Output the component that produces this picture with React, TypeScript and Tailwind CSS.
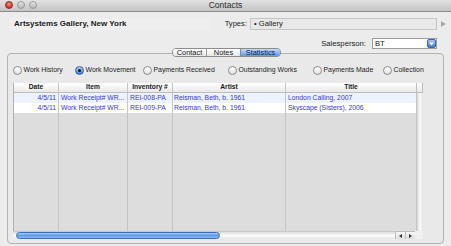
import React from 'react';

function Radio({ checked }: { checked?: boolean }) {
  return checked ? (
    <span className="w-[9px] h-[9px] rounded-full border border-[#2f5fa8] bg-gradient-to-b from-[#b4d3f8] to-[#3c7ddf] flex items-center justify-center shrink-0">
      <span className="w-[3px] h-[3px] rounded-full bg-[#111]" />
    </span>
  ) : (
    <span className="w-[9px] h-[9px] rounded-full border border-[#8a8a8a] bg-gradient-to-b from-white to-[#e2e2e2] shrink-0" />
  );
}

const radios = [
  { label: 'Work History', w: 'w-[62px]', checked: false },
  { label: 'Work Movement', w: 'w-[68px]', checked: true },
  { label: 'Payments Received', w: 'w-[85px]', checked: false },
  { label: 'Outstanding Works', w: 'w-[85px]', checked: false },
  { label: 'Payments Made', w: 'w-[70px]', checked: false },
  { label: 'Collection', w: 'w-[45px]', checked: false },
];

const rows = [
  {
    date: '4/5/11',
    item: 'Work Receipt# WR...',
    inv: 'REI-008-PA',
    artist: 'Reisman, Beth, b. 1961',
    title: 'London Calling, 2007',
    bg: 'bg-[#edf3fe]',
  },
  {
    date: '4/5/11',
    item: 'Work Receipt# WR...',
    inv: 'REI-009-PA',
    artist: 'Reisman, Beth, b. 1961',
    title: 'Skyscape (Sisters), 2006',
    bg: 'bg-white',
  },
];

export default function App() {
  return (
    <div className="w-[451px] h-[246px] overflow-hidden bg-[#ececec] font-['Liberation_Sans',Arial,sans-serif] text-[#1a1a1a] flex flex-col">
      {/* Title bar */}
      <div className="h-[12px] shrink-0 relative flex items-center justify-center bg-gradient-to-b from-[#e2e2e2] to-[#c4c4c4] border-b border-[#8c8c8c]">
        <div className="absolute left-[5px] top-[1px] flex gap-[4px]">
          <span className="w-[8px] h-[8px] rounded-full bg-[radial-gradient(circle_at_50%_35%,#ff9a8c,#d9362b_60%,#a8201a)] border border-[#9c2a22]" />
          <span className="w-[8px] h-[8px] rounded-full bg-gradient-to-b from-[#e6e6e6] to-[#b5b5b5] border border-[#9a9a9a]" />
          <span className="w-[8px] h-[8px] rounded-full bg-gradient-to-b from-[#e6e6e6] to-[#b5b5b5] border border-[#9a9a9a]" />
        </div>
        <span className="text-[8.5px] leading-none text-[#2a2a2a]">Contacts</span>
      </div>

      {/* Row 1 */}
      <div className="mt-[6px] h-[12px] shrink-0 flex items-center">
        <div className="ml-[10px] w-[200px] h-[12px] bg-[#efefef] flex items-center pl-[4px] text-[8px] font-bold leading-none">
          Artsystems Gallery, New York
        </div>
        <div className="ml-auto flex items-center">
          <span className="text-[7.6px] leading-none">Types:</span>
          <div className="ml-[3px] w-[187px] h-[12px] border border-[#c4c4c4] bg-[#e8e8e8] text-[7.6px] leading-none pl-[3px] flex items-center">
            • Gallery
          </div>
          <svg width="5" height="6" viewBox="0 0 5 6" className="ml-[4px] mr-[5px]">
            <path d="M0 0 L5 3 L0 6 Z" fill="#a8a8a8" />
          </svg>
        </div>
      </div>

      {/* Row 2 */}
      <div className="mt-[8px] h-[11px] shrink-0 flex items-center justify-end pr-[14px]">
        <span className="text-[7.7px] leading-none mr-[6px]">Salesperson:</span>
        <div className="w-[65px] h-[11px] bg-white border border-[#9c9c9c] flex items-center">
          <span className="text-[7.6px] leading-none pl-[2px] flex-1">BT</span>
          <span className="w-[9px] h-[9px] mr-[0px] rounded-[2px] bg-gradient-to-b from-[#a6c9f6] to-[#3b78d8] border border-[#3a66a8] flex items-center justify-center">
            <svg width="5" height="4" viewBox="0 0 5 4">
              <path d="M0 0.5 L5 0.5 L2.5 3.5 Z" fill="#fff" />
            </svg>
          </span>
        </div>
      </div>

      {/* Group box */}
      <div className="mt-[4px] ml-[7px] w-[437px] flex-1 mb-[2px] relative border border-[#b3b3b3] rounded-[4px] bg-[#e9e9e9] flex flex-col pl-[5px]">
        {/* Tabs */}
        <div className="absolute left-[164px] top-[-6px] h-[9px] flex border border-[#8c8c8c] rounded-[4px] overflow-hidden text-[7.4px] leading-none">
          <div className="w-[34px] flex items-center justify-center bg-gradient-to-b from-white to-[#e6e6e6] border-r border-[#9c9c9c]">Contact</div>
          <div className="w-[34px] flex items-center justify-center bg-gradient-to-b from-white to-[#e6e6e6] border-r border-[#6f8fc2]">Notes</div>
          <div className="w-[39px] flex items-center justify-center bg-gradient-to-b from-[#c3dbfa] to-[#5f98ea] text-[#0d1f45]">Statistics</div>
        </div>

        {/* Radio row */}
        <div className="mt-[11px] h-[10px] flex items-center shrink-0">
          {radios.map((r) => (
            <div key={r.label} className={`${r.w} flex items-center shrink-0`}>
              <Radio checked={r.checked} />
              <span className="ml-[1.5px] text-[6.9px] leading-none text-[#222]">{r.label}</span>
            </div>
          ))}
        </div>

        {/* Table */}
        <div className="mt-[8px] w-[410px] h-[148px] flex border-l border-[#b0b0b0] shrink-0">
          <div className="w-[402px] flex flex-col">
            {/* header */}
            <div className="h-[10px] flex bg-gradient-to-b from-white to-[#e9e9e9] border-b border-[#bdbdbd] text-[6.7px] font-bold leading-none">
              <div className="w-[45px] border-r border-[#c6c6c6] flex items-center justify-center">Date</div>
              <div className="w-[69px] border-r border-[#c6c6c6] flex items-center justify-center">Item</div>
              <div className="w-[45px] border-r border-[#c6c6c6] flex items-center justify-center">Inventory #</div>
              <div className="w-[113px] border-r border-[#c6c6c6] flex items-center justify-center">Artist</div>
              <div className="w-[130px] flex items-center justify-center">Title</div>
            </div>
            {rows.map((r, i) => (
              <div key={i} className={`h-[10px] flex ${r.bg} text-[6.8px] leading-none text-[#3737e6]`}>
                <div className="w-[45px] border-r border-[#c8c8c8] flex items-center justify-end pr-[2px]">{r.date}</div>
                <div className="w-[69px] border-r border-[#c8c8c8] flex items-center pl-[2px] whitespace-nowrap overflow-hidden">{r.item}</div>
                <div className="w-[45px] border-r border-[#c8c8c8] flex items-center pl-[2px] whitespace-nowrap overflow-hidden">{r.inv}</div>
                <div className="w-[113px] border-r border-[#c8c8c8] flex items-center pl-[1px] whitespace-nowrap overflow-hidden">{r.artist}</div>
                <div className="w-[130px] flex items-center pl-[2px] whitespace-nowrap overflow-hidden">{r.title}</div>
              </div>
            ))}
            <div className="flex-1 flex bg-[#dddddd]">
              <div className="w-[45px] border-r border-[#c4c4c4]" />
              <div className="w-[69px] border-r border-[#c4c4c4]" />
              <div className="w-[45px] border-r border-[#c4c4c4]" />
              <div className="w-[113px] border-r border-[#c4c4c4]" />
              <div className="w-[130px]" />
            </div>
          </div>
          {/* vertical scrollbar */}
          <div className="w-[8px] flex flex-col">
            <div className="h-[10px] bg-gradient-to-b from-white to-[#e9e9e9] border-b border-l border-r border-[#bdbdbd]" />
            <div className="flex-1 bg-gradient-to-r from-[#d8d8d8] via-[#fbfbfb] to-[#e4e4e4] border-l border-[#c4c4c4]" />
          </div>
        </div>

        {/* Horizontal scrollbar */}
        <div className="w-[410px] h-[9px] flex shrink-0">
          <div className="w-[382px] h-[8px] bg-gradient-to-b from-[#dcdcdc] via-[#fbfbfb] to-[#e8e8e8] border-t border-[#c8c8c8] flex items-center pl-[3px]">
            <div className="w-[204px] h-[7px] rounded-full border border-[#3d6fb8] bg-gradient-to-b from-[#a9cdf7] via-[#5d9bec] to-[#8dbcf4]" />
          </div>
          <div className="w-[10px] h-[8px] bg-gradient-to-b from-[#f6f6f6] to-[#dedede] border-t border-l border-[#bdbdbd] flex items-center justify-center">
            <svg width="3" height="4" viewBox="0 0 3 4"><path d="M3 0 L0 2 L3 4 Z" fill="#333" /></svg>
          </div>
          <div className="w-[10px] h-[8px] bg-gradient-to-b from-[#f6f6f6] to-[#dedede] border-t border-l border-[#bdbdbd] flex items-center justify-center">
            <svg width="3" height="4" viewBox="0 0 3 4"><path d="M0 0 L3 2 L0 4 Z" fill="#333" /></svg>
          </div>
          <div className="w-[8px] h-[8px] bg-[#f0f0f0]" />
        </div>
      </div>
    </div>
  );
}
